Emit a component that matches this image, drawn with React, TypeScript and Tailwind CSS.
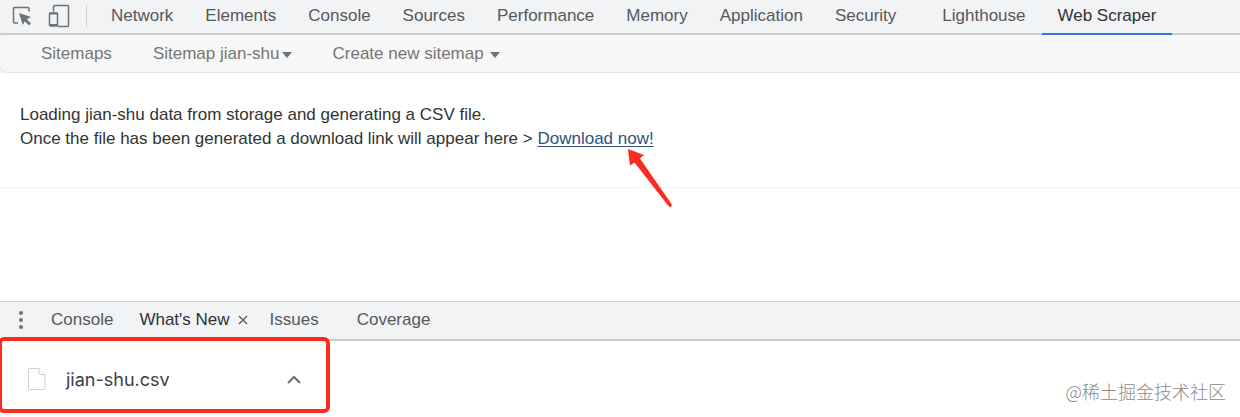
import { useState } from "react";
import clsx from "clsx";

// ─── Data ─────────────────────────────────────────────────────────────────────

const PANELS = [
  "Network",
  "Elements",
  "Console",
  "Sources",
  "Performance",
  "Memory",
  "Application",
  "Security",
  "Lighthouse",
  "Web Scraper",
];

// ─── Icons ────────────────────────────────────────────────────────────────────

function InspectIcon() {
  return (
    <svg width="20" height="20" viewBox="0 0 20 20" fill="none" aria-hidden>
      <path d="M6 17H2.500a1 1 0 0 1-1-1V2.500a1 1 0 0 1 1-1H16a1 1 0 0 1 1 1V5.500" stroke="#6e7276" strokeWidth="1.5" />
      <path d="M7 7l12 4-4.200 2.200 4.200 4.200-2 2-4.200-4.200-2 3.800z" fill="#6e7276" />
    </svg>
  );
}

function DeviceIcon() {
  return (
    <svg width="22" height="24" viewBox="0 0 22 24" fill="none" stroke="#6e7276" aria-hidden>
      <path d="M5.500 7.500V2.500a1 1 0 0 1 1-1h13a1 1 0 0 1 1 1v19a1 1 0 0 1-1 1H9.500" strokeWidth="1.5" />
      <rect x="1.500" y="9" width="8" height="13" rx="1" strokeWidth="1.5" />
      <path d="M1.500 9.500h8M1.500 21h8" strokeWidth="2" />
    </svg>
  );
}

function Caret() {
  return (
    <svg className="mt-0.5" width="10" height="6" viewBox="0 0 10 6" fill="#717171" aria-hidden>
      <path d="M0 0h10L5 6z" />
    </svg>
  );
}

function FileIcon() {
  return (
    <svg width="18" height="22" viewBox="0 0 18 22" fill="#fff" stroke="#cfcfcf" aria-hidden>
      <path d="M1.500.500h9.500l6 6v14a1 1 0 0 1-1 1H1.500a1 1 0 0 1-1-1v-19a1 1 0 0 1 1-1z" />
      <path d="M11 .500v5a1 1 0 0 0 1 1h5" />
    </svg>
  );
}

// ─── Top toolbar ──────────────────────────────────────────────────────────────

function PanelTabs() {
  const [active, setActive] = useState("Web Scraper");

  return (
    <header className="flex h-[35px] items-stretch border-b-2 border-[#cccdce] bg-[#f1f3f4] pl-3">
      <div className="flex items-center gap-4 pb-0.5">
        <button type="button" aria-label="Inspect element">
          <InspectIcon />
        </button>
        <button type="button" aria-label="Toggle device toolbar">
          <DeviceIcon />
        </button>
        <span className="h-[22px] w-px bg-[#cbcdd0]" />
      </div>
      <nav className="ml-2 flex">
        {PANELS.map((panel) => (
          <button
            key={panel}
            type="button"
            onClick={() => setActive(panel)}
            className={clsx(
              "-mb-0.5 border-b-2 px-4 pb-0.5 whitespace-nowrap",
              panel === "Security" && "mr-[14px]",
              panel === active ? "border-[#2f77d8] text-[#303134]" : "border-transparent",
            )}
          >
            {panel}
          </button>
        ))}
      </nav>
    </header>
  );
}

// ─── Scraper navigation ───────────────────────────────────────────────────────

function ScraperNav() {
  return (
    <div className="bg-[#f1f3f4]">
      <nav className="flex h-[38px] items-center rounded-l-lg border-b border-[#e2e2e2] bg-[#f7f7f7] pl-[41px] text-[#757575]">
        <a href="#sitemaps">Sitemaps</a>
        <button type="button" className="ml-[41px] flex items-center gap-0.5">
          Sitemap jian-shu
          <Caret />
        </button>
        <button type="button" className="ml-[41px] flex items-center gap-1.5">
          Create new sitemap
          <Caret />
        </button>
      </nav>
    </div>
  );
}

// ─── Export message ───────────────────────────────────────────────────────────

function ExportMessage() {
  return (
    <main className="min-h-[228px]">
      <div className="border-b border-[#f3f3f3] px-5 pt-[30px] pb-9 leading-6 text-[#333]">
        <p>Loading jian-shu data from storage and generating a CSV file.</p>
        <p>
          Once the file has been generated a download link will appear here &gt;{" "}
          <span className="relative inline-block">
            <a href="#download" className="text-[#2b5480] underline underline-offset-2">
              Download now!
            </a>
            <svg
              className="pointer-events-none absolute top-5 right-[-20px]"
              width="48"
              height="62"
              viewBox="0 0 48 62"
              fill="#fb2b20"
              aria-hidden
            >
              <path d="M2 2l16 6-4 3.500L45.500 57a1.500 1.500 0 0 1-3 2L8.500 15.500 4 18.500z" />
            </svg>
          </span>
        </p>
      </div>
    </main>
  );
}

// ─── Drawer ───────────────────────────────────────────────────────────────────

function DrawerTabs() {
  return (
    <div className="flex h-10 items-center border-t border-b-2 border-t-[#cccdce] border-b-[#cccdce] bg-[#f1f3f4] pb-0.5 pl-[18px]">
      <button type="button" aria-label="More tools">
        <svg width="6" height="20" viewBox="0 0 6 20" fill="#6e7276" aria-hidden>
          <circle cx="3" cy="3" r="2" />
          <circle cx="3" cy="10" r="2" />
          <circle cx="3" cy="17" r="2" />
        </svg>
      </button>
      <button type="button" className="ml-[27px]">Console</button>
      <button type="button" className="ml-[26px] text-[#303134]">What's New</button>
      <button type="button" aria-label="Close What's New" className="ml-2">
        <svg width="10" height="10" viewBox="0 0 10 10" stroke="#5f6368" strokeWidth="1.5" aria-hidden>
          <path d="M1 1l8 8M9 1L1 9" />
        </svg>
      </button>
      <button type="button" className="ml-[22px]">Issues</button>
      <button type="button" className="ml-[38px]">Coverage</button>
    </div>
  );
}

// ─── Download shelf ───────────────────────────────────────────────────────────

function DownloadShelf() {
  return (
    <footer className="flex h-[76px] items-center justify-between pr-[14px]">
      <div className="relative flex h-full w-[330px] items-center pr-[29px] pl-7">
        <FileIcon />
        <span className="mt-0.5 ml-5 font-['Inter',sans-serif] text-lg text-[#3c4043]">jian-shu.csv</span>
        <button type="button" aria-label="Download options" className="ml-auto">
          <svg width="14" height="9" viewBox="0 0 14 9" fill="none" stroke="#6a6d71" strokeWidth="2" aria-hidden>
            <path d="M1 8l6-6 6 6" />
          </svg>
        </button>
        {/* Highlight frame, laid over the drawer's bottom edge */}
        <div className="pointer-events-none absolute -top-1 right-0 bottom-1 -left-0.5 rounded-md border-4 border-[#fb2b20]" />
      </div>
      <span className="mt-6 font-['Noto_Sans_CJK_SC',sans-serif] text-lg font-light text-[#8a8a8a]">
        @稀土掘金技术社区
      </span>
    </footer>
  );
}

// ─── Page ─────────────────────────────────────────────────────────────────────

export default function App() {
  return (
    <div className="overflow-hidden bg-white font-['Liberation_Sans',Arial,sans-serif] text-[17px] leading-6 text-[#55585c]">
      <PanelTabs />
      <ScraperNav />
      <ExportMessage />
      <DrawerTabs />
      <DownloadShelf />
    </div>
  );
}
